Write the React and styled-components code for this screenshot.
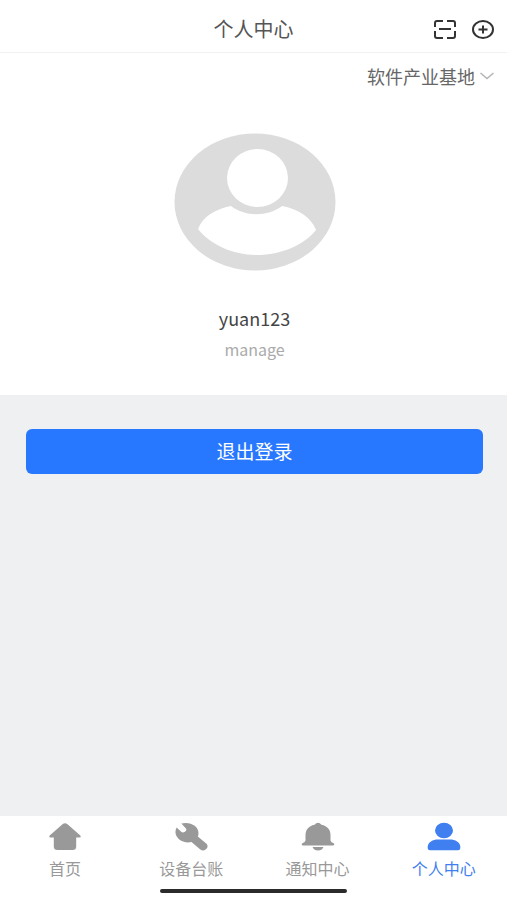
import React, { useState } from "react";
import styled, { createGlobalStyle } from "styled-components";

const GlobalStyle = createGlobalStyle`
  * {
    box-sizing: border-box;
  }

  body {
    margin: 0;
    background: #eef0f2;
    font-family: "Noto Sans CJK SC", "Noto Sans", sans-serif;
    color: #444;
  }

  button, select {
    font-family: inherit;
  }
`;

const Page = styled.div`
  display: flex;
  flex-direction: column;
  min-height: 100vh;
`;

const Header = styled.header`
  display: grid;
  grid-template-columns: 1fr auto 1fr;
  align-items: center;
  height: 53px;
  padding: 6px 12px 0;
  background: #fff;
  border-bottom: 1px solid #f1f1f1;
`;

const Title = styled.h1`
  grid-column: 2;
  margin: 0;
  font-size: 20px;
  font-weight: 400;
  line-height: 28px;
  color: #555;
`;

const Actions = styled.div`
  display: flex;
  justify-content: flex-end;
  gap: 14px;
`;

const IconButton = styled.button`
  display: flex;
  padding: 0;
  border: 0;
  background: none;
  color: #333;
  cursor: pointer;
`;

const Profile = styled.main`
  display: flex;
  flex-direction: column;
  align-items: center;
  padding: 0 0 32px 2px;
  background: #fff;
`;

const SitePicker = styled.div`
  display: flex;
  align-items: center;
  align-self: flex-end;
  gap: 4px;
  height: 46px;
  padding-right: 12px;
  color: #b5b5b5;
`;

const SiteSelect = styled.select`
  appearance: none;
  padding: 0;
  border: 0;
  background: none;
  font-size: 18px;
  line-height: 28px;
  color: #666;
`;

const Avatar = styled.svg`
  display: block;
  margin: 34px 0 33px;
`;

const UserName = styled.div`
  font-size: 18px;
  line-height: 28px;
  color: #444;
`;

const UserRole = styled.div`
  margin-top: 3px;
  font-size: 16px;
  line-height: 28px;
  color: #aaa;
`;

const Content = styled.section`
  flex: 1;
  padding: 34px 24px 34px 26px;
`;

const LogoutButton = styled.button`
  display: block;
  width: 100%;
  height: 45px;
  padding: 0 0 2px;
  border: 0;
  border-radius: 6px;
  background: #2878ff;
  font-size: 19px;
  line-height: 28px;
  color: #fff;
  cursor: pointer;
`;

const Footer = styled.footer`
  position: sticky;
  bottom: 0;
  padding-bottom: 7px;
  background: #fff;
`;

const TabBar = styled.nav`
  display: grid;
  grid-template-columns: repeat(4, 1fr);
  padding: 6px 0 9px 2px;
`;

const Tab = styled.a`
  display: flex;
  flex-direction: column;
  align-items: center;
  gap: 4px;
  font-size: 16px;
  line-height: 24px;
  text-decoration: none;
  color: ${(props) => (props.$active ? "#3f7ff0" : "#999")};
`;

const HomeIndicator = styled.div`
  width: 37%;
  height: 4px;
  margin: 0 auto;
  border-radius: 2px;
  background: #2b2b2b;
`;

const ScanIcon = () => (
  <svg width="24" height="24" viewBox="0 0 24 24" fill="none" stroke="currentColor" strokeWidth="2" aria-hidden="true">
    <path d="M2 10V6Q2 4 4 4H10M14 4H20Q22 4 22 6V10M22 14V19Q22 21 20 21H14M10 21H4Q2 21 2 19V14M6 12H18" />
  </svg>
);

const PlusIcon = () => (
  <svg width="24" height="24" viewBox="0 0 24 24" fill="none" stroke="currentColor" strokeWidth="2" aria-hidden="true">
    <ellipse cx="12" cy="12.500" rx="10" ry="8.500" />
    <path d="M7.500 12.500H16.500M12 8.500V16.500" />
  </svg>
);

const ChevronIcon = () => (
  <svg width="16" height="10" viewBox="0 0 16 10" fill="none" stroke="currentColor" strokeWidth="1.500" aria-hidden="true">
    <path d="M1.500 2L8 7.500L14.500 2" />
  </svg>
);

const HomeIcon = () => (
  <svg width="34" height="30" viewBox="0 0 34 30" fill="currentColor" aria-hidden="true">
    <path d="M14.500 2.200Q17 .5 19.500 2.200L32.300 13.500Q33.500 15.300 31.500 15.500H28.200V24.500Q28.200 28 24.500 28H9.500Q5.800 28 5.800 24.500V15.500H2.500Q.5 15.300 1.700 13.500Z" />
  </svg>
);

const WrenchIcon = () => (
  <svg width="34" height="30" viewBox="0 0 34 30" fill="currentColor" aria-hidden="true">
    <path d="M7.300 1.500C16 -.8 24.500 4 24.500 11C24.500 12.600 24.200 13.700 23.800 14.600L32.500 21.800C36 25.500 30.300 30.800 26 27.200L17.500 20C8 22.300 -2 14.500 2.600 5.500L7.500 10Q9 11 11 9.700Q13 8.200 12 6.600Z" />
  </svg>
);

const BellIcon = () => (
  <svg width="34" height="30" viewBox="0 0 34 30" fill="currentColor" aria-hidden="true">
    <path d="M13.500 2.800Q17 -1.500 20.500 2.800C26.500 4 29.500 8 29.500 13V18.500Q29.500 20 33 21.500Q33.800 23.500 32 23.500H2Q.2 23.500 1 21.500Q4.500 20 4.500 18.500V13C4.500 8 7.500 4 13.500 2.800Z" />
    <path d="M11.500 25H22.500Q21 28.500 17 28.500T11.500 25Z" />
  </svg>
);

const UserIcon = () => (
  <svg width="34" height="30" viewBox="0 0 34 30" fill="currentColor" aria-hidden="true">
    <ellipse cx="17" cy="8.500" rx="9" ry="7.700" />
    <path d="M.7 25C.7 20 6 17.500 11 17.500H23C28 17.500 33.300 20 33.300 25V26Q33.300 28.300 31 28.300H3Q.7 28.300 .7 26Z" />
  </svg>
);

const tabs = [
  { id: "home", label: "首页", Icon: HomeIcon },
  { id: "devices", label: "设备台账", Icon: WrenchIcon },
  { id: "notices", label: "通知中心", Icon: BellIcon },
  { id: "profile", label: "个人中心", Icon: UserIcon },
];

export default function App() {
  const [active, setActive] = useState("profile");

  return (
    <>
      <GlobalStyle />
      <Page>
        <Header>
          <Title>个人中心</Title>
          <Actions>
            <IconButton type="button" aria-label="扫一扫">
              <ScanIcon />
            </IconButton>
            <IconButton type="button" aria-label="添加">
              <PlusIcon />
            </IconButton>
          </Actions>
        </Header>
        <Profile>
          <SitePicker>
            <SiteSelect aria-label="基地">
              <option>软件产业基地</option>
            </SiteSelect>
            <ChevronIcon />
          </SitePicker>
          <Avatar width="162" height="138" viewBox="0 0 162 138" aria-hidden="true">
            <ellipse cx="81" cy="69" rx="80.500" ry="68.500" fill="#dcdcdc" />
            <ellipse cx="83.500" cy="45" rx="30.500" ry="29" fill="#fff" />
            <path d="M57 73C42 76 29 83 24 96C37 112 59 122 83 122C107 122 130 112 142 97C137 84 124 76 108 73C94 84 71 84 57 73Z" fill="#fff" />
          </Avatar>
          <UserName>yuan123</UserName>
          <UserRole>manage</UserRole>
        </Profile>
        <Content>
          <LogoutButton type="button">退出登录</LogoutButton>
        </Content>
        <Footer>
          <TabBar>
            {tabs.map(({ id, label, Icon }) => (
              <Tab
                key={id}
                href={`#${id}`}
                $active={active === id}
                aria-current={active === id ? "page" : undefined}
                onClick={() => setActive(id)}
              >
                <Icon />
                {label}
              </Tab>
            ))}
          </TabBar>
          <HomeIndicator />
        </Footer>
      </Page>
    </>
  );
}
